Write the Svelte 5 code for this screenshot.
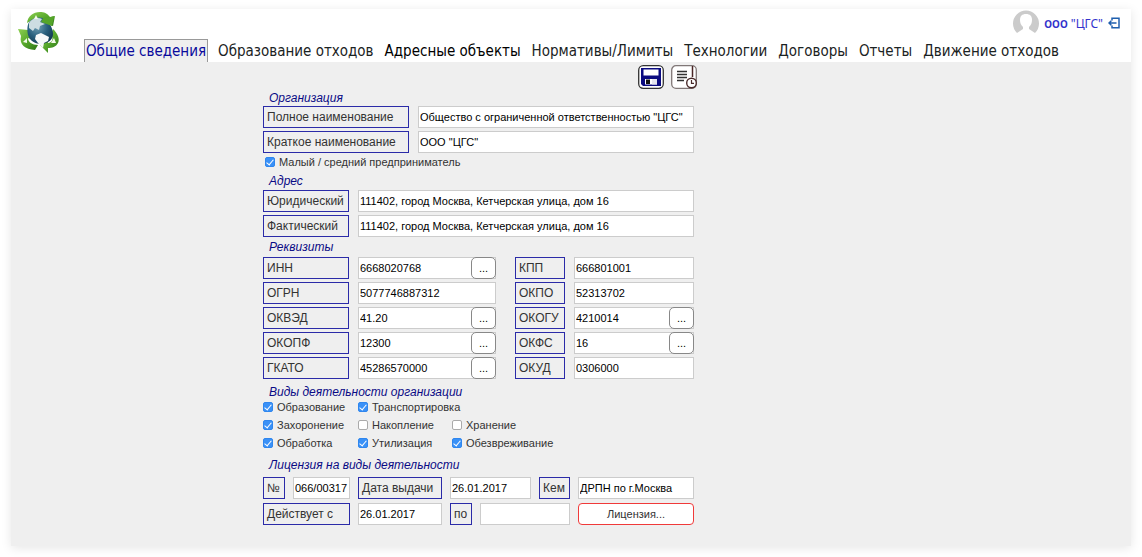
<script>
  const tabs = [
    'Общие сведения', 'Образование отходов', 'Адресные объекты', 'Нормативы/Лимиты',
    'Технологии', 'Договоры', 'Отчеты', 'Движение отходов'
  ];
  const names = [
    { id: 'full', label: 'Полное наименование', value: 'Общество с ограниченной ответственностью "ЦГС"' },
    { id: 'short', label: 'Краткое наименование', value: 'ООО "ЦГС"' }
  ];
  const addresses = [
    { id: 'legal', label: 'Юридический', value: '111402, город Москва, Кетчерская улица, дом 16' },
    { id: 'actual', label: 'Фактический', value: '111402, город Москва, Кетчерская улица, дом 16' }
  ];
  const codes = [
    { id: 'inn', label: 'ИНН', value: '6668020768', pick: true },
    { id: 'kpp', label: 'КПП', value: '666801001' },
    { id: 'ogrn', label: 'ОГРН', value: '5077746887312' },
    { id: 'okpo', label: 'ОКПО', value: '52313702' },
    { id: 'okved', label: 'ОКВЭД', value: '41.20', pick: true },
    { id: 'okogu', label: 'ОКОГУ', value: '4210014', pick: true },
    { id: 'okopf', label: 'ОКОПФ', value: '12300', pick: true },
    { id: 'okfs', label: 'ОКФС', value: '16', pick: true },
    { id: 'gkato', label: 'ГКАТО', value: '45286570000', pick: true },
    { id: 'okud', label: 'ОКУД', value: '0306000' }
  ];
  const activities = [
    [['Образование', true], ['Транспортировка', true]],
    [['Захоронение', true], ['Накопление', false], ['Хранение', false]],
    [['Обработка', true], ['Утилизация', true], ['Обезвреживание', true]]
  ];
</script>

{#snippet tag(id, text)}
  <label class="tag" for={id}>{text}</label>
{/snippet}

{#snippet check(text, on)}
  <label class="check"><input type="checkbox" checked={on} /><span>{text}</span></label>
{/snippet}

<div class="app">
  <header>
    <svg class="logo" viewBox="0 0 44 44" aria-hidden="true">
      <defs>
        <radialGradient id="sea" cx="40%" cy="35%" r="70%">
          <stop offset="0" stop-color="#6f9fb4" /><stop offset=".55" stop-color="#28607e" /><stop offset="1" stop-color="#123a52" />
        </radialGradient>
        <linearGradient id="leaf" x1="0" y1="0" x2="1" y2="1">
          <stop offset="0" stop-color="#8fd052" /><stop offset=".5" stop-color="#58a92c" /><stop offset="1" stop-color="#2c7417" />
        </linearGradient>
      </defs>
      <path d="M10 13C11 6 16 2 23 2c4 0 7 1 10 5l5-1-2 10-12-4 3-2c-4-3-9-3-12 0z" fill="url(#leaf)" />
      <path d="M1 19l10 1 3 9-3-1c0 4 4 7 10 7l-3 5C8 39 2 35 4 26z" fill="url(#leaf)" />
      <path d="M36 19c5 5 7 10 5 14-2 4-6 5-10 5v5l-8-8 8-6v4c4 0 6-4 3-9z" fill="url(#leaf)" />
      <path d="M13 11c4-4 12-5 16-1 4 3 7 9 7 14 0 6-5 9-11 10-7 0-12-3-14-9-1-5-1-11 2-14z" fill="url(#sea)" />
      <path d="M12 13c3-5 9-6 13-4l-2 3 5 2-5 2-1 4-4-2-2 3-4-3z" fill="#cddde2" />
      <path d="M19 25l5-2 8 4-1 4-4 2-1 5-5-5-3-4z" fill="#f6f9fa" />
      <path d="M26 8l8-1 3-1-2 10-11-4z" fill="#55a52a" />
      <path d="M19 5l2 4h-4zM6 32l4-4v5zM37 28l2 5h-5z" fill="#f4faea" />
    </svg>
    <div class="bar">
      <div class="user">
        <svg class="avatar" viewBox="0 0 26 26" aria-hidden="true">
          <path d="M4 23A13 13 0 1 1 22 23L16 19v-2c2-2 3-4 3-7 0-4-2-6-6-6s-6 2-6 6c0 3 1 5 3 7v2z" fill="#cbcbcb" />
        </svg>
        <span><b>ООО</b> "ЦГС"</span>
        <button class="exit" aria-label="Выход">
          <svg viewBox="0 0 12 12" fill="none" stroke="#1f5fae" stroke-width="1.5">
            <path d="M4 3.5V1.2h7v9.6H4V8.5M8.5 6H1M3.3 3.7L1 6l2.3 2.3" />
          </svg>
        </button>
      </div>
      <nav>
        {#each tabs as tab, i}
          <a href="#tab{i}" class:active={i === 0} class:strong={i === 2}>{tab}</a>
        {/each}
      </nav>
    </div>
  </header>

  <main>
    <div class="tools">
      <button aria-label="Сохранить">
        <svg viewBox="0 0 26 24">
          <rect x=".7" y=".7" width="24.6" height="22.6" rx="4.5" fill="#fff" stroke="#333" stroke-width="1.3" />
          <path d="M3 3h20v18H5l-2-2z" fill="#0b0b80" />
          <path d="M5.5 4.5h15v6h-15zM7 14h12v5.5H7z" fill="#fff" />
          <path d="M8 14.5h4V19H8z" fill="#111" />
          <path d="M14 14h5v5.5h-5z" fill="#e5e5ee" />
        </svg>
      </button>
      <button aria-label="История">
        <svg viewBox="0 0 26 24" fill="none">
          <path d="M15 23.3H5A4.3 4.3 0 0 1 .7 19V5A4.3 4.3 0 0 1 5 .7h16A4.3 4.3 0 0 1 25.3 5v14a4.3 4.3 0 0 1-4.3 4.3z" fill="#fff" stroke="#807777" stroke-width="1.3" />
          <path d="M6 6.5h10M6 9.5h10M6 12.5h10M6 15.5h7" stroke="#333" stroke-width="1.4" />
          <path d="M21.5 1v11" stroke="#4a2525" stroke-width="1.5" />
          <circle cx="20.5" cy="18" r="4.8" fill="#fff" stroke="#4a2b2b" stroke-width="1.4" />
          <path d="M20.5 15v3.3H23" stroke="#4a2b2b" stroke-width="1.2" />
        </svg>
      </button>
    </div>

    <section>
      <h2>Организация</h2>
      <div class="grid names">
        {#each names as f}
          {@render tag(f.id, f.label)}
          <input id={f.id} type="text" value={f.value} />
        {/each}
      </div>
      <div class="single">{@render check('Малый / средний предприниматель', true)}</div>
    </section>

    <section>
      <h2>Адрес</h2>
      <div class="grid addresses">
        {#each addresses as f}
          {@render tag(f.id, f.label)}
          <input id={f.id} type="text" value={f.value} />
        {/each}
      </div>
    </section>

    <section>
      <h2>Реквизиты</h2>
      <div class="grid codes">
        {#each codes as f}
          {@render tag(f.id, f.label)}
          <div class="field">
            <input id={f.id} type="text" value={f.value} />
            {#if f.pick}<button class="pick" aria-label="Выбрать {f.label}">...</button>{/if}
          </div>
        {/each}
      </div>
    </section>

    <section class="spaced">
      <h2>Виды деятельности организации</h2>
      <div class="activities">
        {#each activities as row}
          <div class="row">
            {#each row as [text, on]}{@render check(text, on)}{/each}
          </div>
        {/each}
      </div>
    </section>

    <section class="spaced">
      <h2>Лицензия на виды деятельности</h2>
      <div class="grid licence issue">
        {@render tag('num', '№')}
        <input id="num" type="text" value="066/00317" />
        {@render tag('issued', 'Дата выдачи')}
        <input id="issued" type="text" value="26.01.2017" />
        {@render tag('by', 'Кем')}
        <input id="by" type="text" value="ДРПН по г.Москва" />
      </div>
      <div class="grid licence term">
        {@render tag('from', 'Действует с')}
        <input id="from" type="text" value="26.01.2017" />
        {@render tag('to', 'по')}
        <input id="to" type="text" value="" />
        <button class="open">Лицензия...</button>
      </div>
    </section>
  </main>
</div>

<style>
  :global(body) { background: #fff; }
  .app, .app * { box-sizing: border-box; }
  .app {
    margin: 9px 11px 12px;
    background: #efefef;
    box-shadow: 0 2px 10px rgba(0, 0, 0, .1);
    font-family: "Liberation Sans", Arial, sans-serif;
    color: #333;
  }
  button { margin: 0; padding: 0; font: inherit; cursor: pointer; }
  svg { display: block; }
  header {
    display: flex;
    height: 53px;
    background: #fff;
  }
  .logo { flex: none; width: 44px; height: 44px; margin: 1px 23px 0 6px; }
  .bar { display: flex; flex: 1; flex-direction: column; justify-content: space-between; min-width: 0; }
  nav {
    display: flex;
    gap: 9px;
    font-family: "DejaVu Sans Condensed", "Noto Sans", sans-serif;
    white-space: nowrap;
  }
  nav a {
    height: 23px;
    border: 1px solid transparent;
    border-bottom: 0;
    font-size: 15px;
    line-height: 23px;
    color: #1b2323;
    text-decoration: none;
  }
  nav a.strong { color: #000; }
  nav a.active { padding: 0 1px; background: #efefef; border-color: #999; color: #0a0a9c; }
  .user {
    display: flex;
    align-items: center;
    align-self: flex-end;
    gap: 5px;
    height: 26px;
    margin: 1px 11px 0 0;
    font: 12px "Noto Sans", sans-serif;
    color: #3333cc;
    white-space: nowrap;
  }
  .user b { font-size: 10px; }
  .avatar { width: 26px; height: 26px; }
  .exit { width: 12px; height: 12px; border: 0; background: none; }

  main { width: 431px; max-width: 100%; margin-left: 22.5%; padding: 3px 0 18px; }
  .tools { display: flex; justify-content: flex-end; gap: 7px; margin: 0 -3px 2px 0; }
  .tools button { width: 26px; height: 24px; border: 0; background: none; }
  section { margin-bottom: 3px; }
  .spaced { margin-top: 6px; }
  h2 {
    margin: 0 0 0 6px;
    font-size: 12px;
    line-height: 15px;
    font-weight: 400;
    font-style: italic;
    color: #0a0a85;
  }
  .grid { display: grid; column-gap: 9px; row-gap: 3px; }
  .names { grid-template-columns: 146px 1fr; }
  .addresses { grid-template-columns: 86px 1fr; margin-top: 1px; }
  .codes { grid-template-columns: 86px 148px 50px 1fr; margin-top: 2px; }
  .tag {
    height: 22px;
    padding: 0 3px;
    border: 1px solid #2b2ba8;
    font-size: 12px;
    line-height: 20px;
    white-space: nowrap;
  }
  input[type="text"] {
    width: 100%;
    min-width: 0;
    height: 22px;
    padding: 0 1px;
    border: 1px solid #ccc;
    border-radius: 0;
    background: #fff;
    font: 11px "Liberation Sans", Arial, sans-serif;
    color: #000;
  }
  .field { display: flex; position: relative; }
  .field:nth-child(4n + 2) { margin-right: 10px; }
  .pick {
    position: absolute;
    top: 0;
    right: 0;
    width: 25px;
    height: 22px;
    border: 1px solid #888;
    border-radius: 5px;
    background: #fff;
    font-size: 11px;
    line-height: 18px;
    color: #000;
  }
  .check { display: flex; align-items: center; gap: 4px; font-size: 11px; line-height: 18px; white-space: nowrap; }
  .check input {
    flex: none;
    display: grid;
    place-items: center;
    appearance: none;
    width: 10px;
    height: 10px;
    margin: 0;
    border: 1px solid #aaa;
    border-radius: 2px;
    background: #fff;
  }
  .check input:checked { border-color: #2f86ee; background: #3a91f7; }
  .check input:checked::after {
    content: "";
    width: 3px;
    height: 6px;
    margin-bottom: 1px;
    border: solid #fff;
    border-width: 0 1px 1px 0;
    transform: rotate(40deg);
  }
  .single { padding-left: 2px; }
  .activities { margin-top: -2px; }
  .row { display: grid; grid-template-columns: 95px 94px 1fr; }
  .licence { column-gap: 8px; margin-top: 4px; }
  .issue { grid-template-columns: 22px 57px 84px 81px 31px 1fr; }
  .term { grid-template-columns: 87px 84px 22px 90px 1fr; }
  .open { height: 22px; border: 1px solid #f03a3a; border-radius: 4px; background: #fff; font-size: 11px; color: #333; }
</style>
